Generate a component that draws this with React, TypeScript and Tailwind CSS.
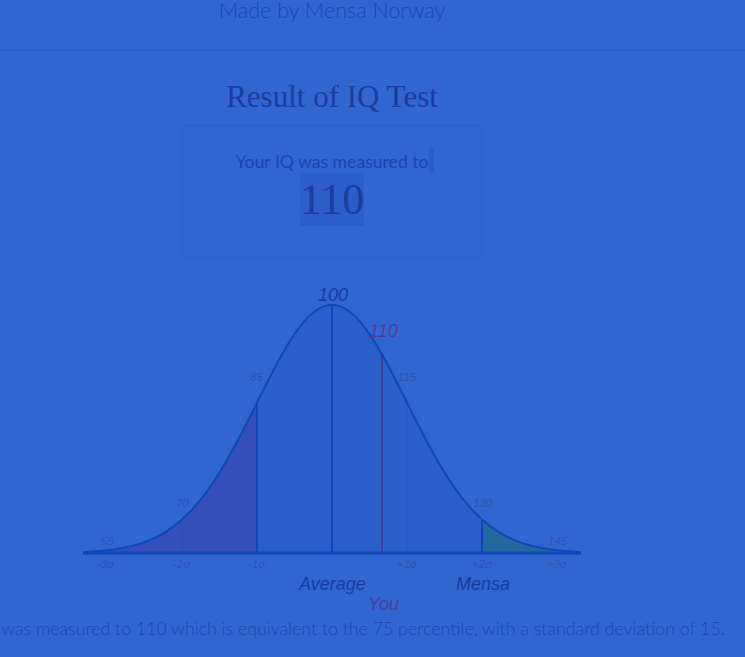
import React from 'react';

const MEAN_X = 332;
const SD_PX = 75;
const PEAK = 248;
const BASE_Y = 553;

function curveY(x: number) {
  const z = (x - MEAN_X) / SD_PX;
  return BASE_Y - PEAK * Math.exp(-0.5 * z * z);
}

function curvePoints(from: number, to: number) {
  const pts: string[] = [];
  for (let x = from; x <= to; x += 1) {
    pts.push(`${x},${curveY(x).toFixed(2)}`);
  }
  return pts;
}

function areaPath(from: number, to: number) {
  return `M${from},${BASE_Y} L${curvePoints(from, to).join(' L')} L${to},${BASE_Y} Z`;
}

const scoreLabels = [
  { x: 101, y: 545, t: '55' },
  { x: 176, y: 507, t: '70' },
  { x: 250, y: 381, t: '85' },
  { x: 398, y: 381, t: '115' },
  { x: 473, y: 507, t: '130' },
  { x: 548, y: 545, t: '145' },
];

const sigmaLabels = [
  { x: 97, t: '-3σ' },
  { x: 173, t: '-2σ' },
  { x: 248, t: '-1σ' },
  { x: 397, t: '+1σ' },
  { x: 472, t: '+2σ' },
  { x: 547, t: '+3σ' },
];

function BellCurve() {
  const youX = 382;
  return (
    <svg width="664" height="360" viewBox="0 258 664 360" className="block overflow-visible">
      <path d={areaPath(83, 257)} fill="#3550bb" />
      <path d={areaPath(257, 482)} fill="#2d5fcb" />
      <path d={areaPath(482, 581)} fill="#21699f" />

      <line x1="182" y1={curveY(182)} x2="182" y2={BASE_Y} stroke="#2450b6" strokeWidth="1.2" />
      <line x1="257" y1={curveY(257)} x2="257" y2={BASE_Y} stroke="#1646b2" strokeWidth="2" />
      <line x1="332" y1={curveY(332)} x2="332" y2={BASE_Y} stroke="#0f47b7" strokeWidth="2" />
      <line x1="407" y1={curveY(407)} x2="407" y2={BASE_Y} stroke="#2a52b6" strokeWidth="1.2" />
      <line x1="482" y1={curveY(482)} x2="482" y2={BASE_Y} stroke="#1646ab" strokeWidth="2" />
      <line x1={youX} y1={curveY(youX)} x2={youX} y2={BASE_Y} stroke="#4b3c9c" strokeWidth="2" />

      <path d={`M${curvePoints(83, 581).join(' L')}`} fill="none" stroke="#0e47b7" strokeWidth="2" />
      <line x1="83" y1={BASE_Y} x2="581" y2={BASE_Y} stroke="#0e47b7" strokeWidth="3" />

      <g fontFamily="'Liberation Sans', Arial, sans-serif" fontStyle="italic">
        {scoreLabels.map((l) => (
          <text key={l.t} x={l.x} y={l.y} fontSize="11.5" fill="#2d52b0">
            {l.t}
          </text>
        ))}
        {sigmaLabels.map((l) => (
          <text key={l.t} x={l.x} y="568" fontSize="11.5" fill="#2d52b0">
            {l.t}
          </text>
        ))}
        <text x="318" y="301" fontSize="18" fill="#173c9f">100</text>
        <text x="369" y="337" fontSize="18" fill="#4b3c9c">110</text>
        <text x="299" y="590" fontSize="18" fill="#173c9f">Average</text>
        <text x="456" y="590" fontSize="18" fill="#173c9f">Mensa</text>
        <text x="368" y="610" fontSize="18" fill="#4b3c9c">You</text>
      </g>
    </svg>
  );
}

export default function App() {
  return (
    <div className="min-h-[657px] w-full overflow-hidden bg-[#3166d0]">
      {/* Header */}
      <div className="h-[51px] border-b border-[#2b5dc6]">
        <div className="w-[664px] flex justify-center">
          <span className="mt-[-1px] text-[21.5px] leading-[22px] font-light text-[#1d45a9] font-['Lato',_'Open_Sans',_sans-serif]">
            Made by Mensa Norway
          </span>
        </div>
      </div>

      <div className="w-[664px] flex flex-col items-center">
        <h1 className="mt-[27px] text-[31px] leading-[38px] text-[#1a3d9f] font-['Liberation_Serif',_'Times_New_Roman',_serif]">
          Result of IQ Test
        </h1>

        {/* Result box */}
        <div className="mt-[9px] w-[300px] h-[133px] border border-[#2c5ec8] rounded-[4px] flex flex-col items-center pt-[22px]">
          <div className="h-[20px] whitespace-nowrap text-[17.6px] leading-[20px] text-[#1c45ab] font-['Lato',_'Open_Sans',_sans-serif]">
            Your IQ was measured to
            <span className="inline-block align-[-5px] ml-[1px] -mr-[6px] w-[5px] h-[25px] bg-[#2b5cc6]" />
          </div>
          <div className="mt-[5px] w-[64px] h-[53px] bg-[#2b5ecb] flex justify-center">
            <span className="text-[44px] leading-[53px] text-[#1b3d9d] font-['Liberation_Serif',_'Times_New_Roman',_serif]">
              110
            </span>
          </div>
        </div>

        <BellCurve />

        <div className="w-full flex justify-center">
          <p className="whitespace-nowrap text-[17.8px] leading-[20px] font-light text-[#1c45ab] font-['Lato',_'Open_Sans',_sans-serif]">
            Your IQ was measured to 110 which is equivalent to the 75 percentile, with a standard deviation of 15.
          </p>
        </div>
      </div>
    </div>
  );
}
